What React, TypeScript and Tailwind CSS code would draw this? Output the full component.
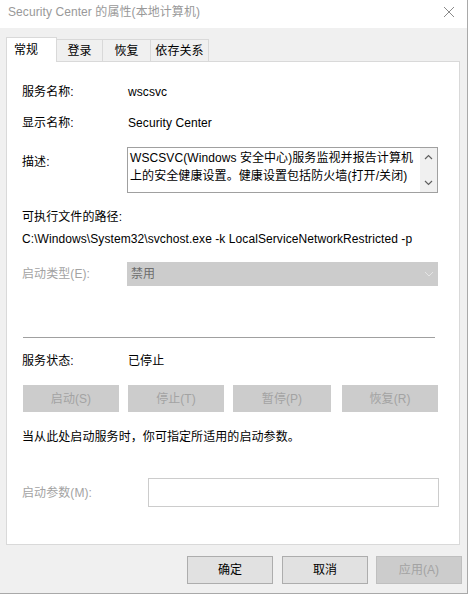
const font = { fontFamily: '"Liberation Sans", "Noto Sans CJK SC", sans-serif' };

const Tab = ({ label, active, w }: { label: string; active?: boolean; w: string }) =>
  active ? (
    <div className={`h-[25px] ${w} pl-[7px] flex items-start pt-[3px] bg-white border border-b-0 border-[#d9d9d9] relative z-10 -mb-px`}>
      {label}
    </div>
  ) : (
    <div className={`h-[22px] ${w} mt-[2px] flex items-center justify-center pt-[1px] bg-[#f0f0f0] border border-l-0 border-b-0 border-[#d9d9d9]`}>
      {label}
    </div>
  );

const GrayButton = ({ label, w }: { label: string; w: string }) => (
  <div className={`h-[27px] ${w} flex items-center justify-center bg-[#cccccc] text-[#a3a3a3]`}>{label}</div>
);

export default function App() {
  return (
    <div className="w-[471px] h-[595px] bg-white text-[12px] tracking-[0.08px] text-black" style={font}>
      <div className="w-[468px] h-[594px] bg-[#f0f0f0] border-r border-b border-[#a9a9a9] flex flex-col">
        {/* title bar */}
        <div className="h-[28px] bg-white flex items-center justify-between pl-[8px] pr-[12px] shrink-0">
          <span className="text-[#999999] -mt-[4px]">Security Center 的属性(本地计算机)</span>
          <svg width="12" height="12" viewBox="0 0 12 12" className="-mt-[4px]">
            <path d="M1 1L11 11M11 1L1 11" stroke="#8a8a8a" strokeWidth="1" />
          </svg>
        </div>

        {/* tabs */}
        <div className="flex pl-[6px] pt-[9px] items-start">
          <Tab label="常规" w="w-[51px]" active />
          <Tab label="登录" w="w-[46px]" />
          <Tab label="恢复" w="w-[48px]" />
          <Tab label="依存关系" w="w-[58px]" />
        </div>

        {/* panel */}
        <div className="mx-[6px] w-[454px] h-[484px] bg-white border border-[#d9d9d9] flex flex-col px-[15px]">
          <div className="mt-[20px] h-[20px] flex items-center">
            <span className="w-[106px]">服务名称:</span>
            <span>wscsvc</span>
          </div>
          <div className="mt-[11px] h-[20px] flex items-center">
            <span className="w-[106px]">显示名称:</span>
            <span>Security Center</span>
          </div>
          <div className="mt-[14px] flex">
            <span className="w-[105px] pt-[6px]">描述:</span>
            <div className="w-[311px] h-[46px] border border-[#a0a0a0] flex">
              <div className="flex-1 pl-[2px] pt-[1px] leading-[18px]">
                WSCSVC(Windows 安全中心)服务监视并报告计算机上的安全健康设置。健康设置包括防火墙(打开/关闭)
              </div>
              <div className="w-[17px] bg-[#f0f0f0] flex flex-col items-center justify-between py-[6px]">
                <svg width="9" height="6" viewBox="0 0 9 6">
                  <path d="M1 5L4.5 1.5L8 5" stroke="#606060" strokeWidth="1.2" fill="none" />
                </svg>
                <svg width="9" height="6" viewBox="0 0 9 6">
                  <path d="M1 1L4.5 4.5L8 1" stroke="#606060" strokeWidth="1.2" fill="none" />
                </svg>
              </div>
            </div>
          </div>
          <div className="mt-[14px] h-[20px] flex items-center">可执行文件的路径:</div>
          <div className="mt-[2px] h-[20px] flex items-center whitespace-nowrap">
            C:\Windows\System32\svchost.exe -k LocalServiceNetworkRestricted -p
          </div>
          <div className="mt-[13px] flex items-center">
            <span className="w-[105px] text-[#a3a3a3]">启动类型(E):</span>
            <div className="w-[311px] h-[24px] bg-[#cccccc] flex items-center justify-between pl-[4px] pr-[4px] text-[#6d6d6d]">
              <span>禁用</span>
              <svg width="10" height="6" viewBox="0 0 10 6">
                <path d="M1 1L5 5L9 1" stroke="#e4e4e4" strokeWidth="1" fill="none" />
              </svg>
            </div>
          </div>
          <div className="mt-[51px] h-px bg-[#a0a0a0] w-[412px] ml-[1px]" />
          <div className="mt-[13px] h-[20px] flex items-center">
            <span className="w-[106px]">服务状态:</span>
            <span>已停止</span>
          </div>
          <div className="mt-[14px] flex ml-[1px]">
            <GrayButton label="启动(S)" w="w-[96px]" />
            <div className="w-[9px]" />
            <GrayButton label="停止(T)" w="w-[96px]" />
            <div className="w-[9px]" />
            <GrayButton label="暂停(P)" w="w-[98px]" />
            <div className="w-[11px]" />
            <GrayButton label="恢复(R)" w="w-[96px]" />
          </div>
          <div className="mt-[15px] h-[20px] flex items-center">当从此处启动服务时，你可指定所适用的启动参数。</div>
          <div className="mt-[31px] flex items-center">
            <span className="w-[126px] text-[#a3a3a3]">启动参数(M):</span>
            <div className="w-[291px] h-[29px] border border-[#cccccc] bg-white" />
          </div>
        </div>

        {/* bottom buttons */}
        <div className="mt-[11px] flex pl-[187px]">
          <div className="w-[86px] h-[28px] bg-[#e1e1e1] border border-[#adadad] flex items-center justify-center">确定</div>
          <div className="w-[9px]" />
          <div className="w-[86px] h-[28px] bg-[#e1e1e1] border border-[#adadad] flex items-center justify-center">取消</div>
          <div className="w-[8px]" />
          <div className="w-[86px] h-[28px] bg-[#cccccc] border border-[#bfbfbf] flex items-center justify-center text-[#a3a3a3]">应用(A)</div>
        </div>
      </div>
    </div>
  );
}
